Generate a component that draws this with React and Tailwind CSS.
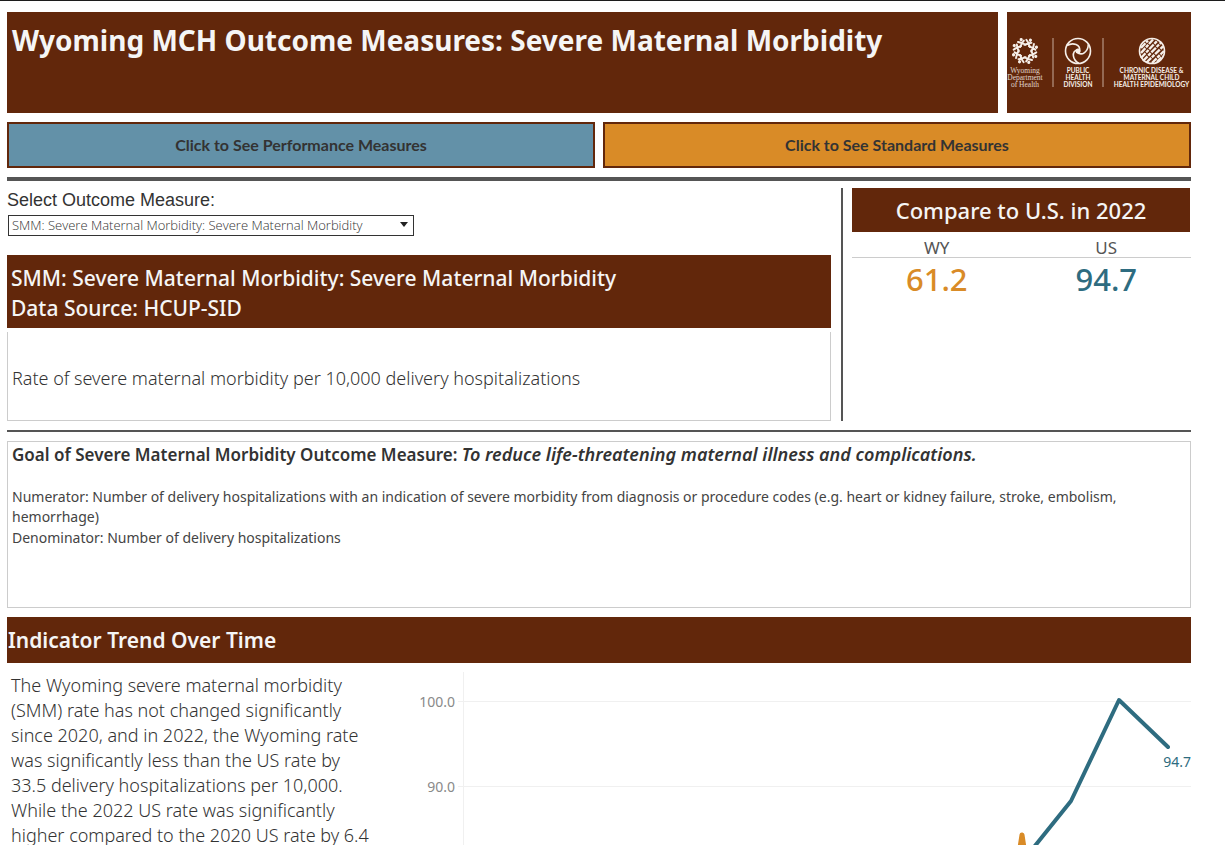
import React from "react";

const FIGURES = [0, 45, 90, 135, 180, 225, 270, 315];
const ARMS = [0, 120, 240];

function Logos() {
  return (
    <svg viewBox="0 0 368 202" className="block h-[101px] w-[184px] text-[#f6efe9]" role="img" aria-label="Program logos">
      <g transform="translate(36 78)" fill="none" stroke="currentColor" strokeLinecap="round">
        {FIGURES.map((a) => (
          <g key={a} transform={`rotate(${a + 22})`}>
            <path d="M-6 -11L1 -17L6 -11M1 -17L-6 -22M1 -17L6 -20" strokeWidth="3.800" />
            <circle cx="2" cy="-24" r="3.200" fill="currentColor" stroke="none" />
          </g>
        ))}
      </g>
      <g fill="currentColor" fontFamily='"Liberation Serif", serif' fontSize="15" textAnchor="middle" opacity="0.850">
        <text x="36" y="122">Wyoming</text>
        <text x="36" y="136">Department</text>
        <text x="36" y="150">of Health</text>
      </g>
      <path d="M92 52V150M192 52V150" stroke="#a5806c" strokeWidth="3" />
      <g transform="translate(142 78)" fill="none" stroke="currentColor" strokeWidth="3.200">
        <circle r="25" />
        {ARMS.map((a) => (
          <path key={a} transform={`rotate(${a})`} d="M-22 -11C-10 -18 6 -13 3 1" />
        ))}
        <circle r="5" fill="currentColor" stroke="none" />
      </g>
      <g transform="translate(290 78)" fill="none" stroke="currentColor">
        <circle r="25" strokeWidth="3.200" />
        <path
          d="M-22 4L2 -23M-22 14L12 -22M-18 20L19 -18M-11 23L23 -10M0 24L24 0M-22 -6L-8 -21M10 22L22 10"
          strokeWidth="4.800"
          strokeDasharray="13 2 7 2"
        />
      </g>
      <g fill="currentColor" fontFamily="Lato, sans-serif" fontWeight="700" fontSize="13" textAnchor="middle">
        <text x="142" y="121">PUBLIC</text>
        <text x="142" y="136">HEALTH</text>
        <text x="142" y="150">DIVISION</text>
        <text x="289" y="121">CHRONIC DISEASE &amp;</text>
        <text x="289" y="136">MATERNAL CHILD</text>
        <text x="289" y="150">HEALTH EPIDEMIOLOGY</text>
      </g>
    </svg>
  );
}

function TrendChart() {
  return (
    <svg viewBox="0 0 778 173" preserveAspectRatio="xMaxYMin meet" className="block w-full" role="img" aria-label="Indicator trend over time">
      <g stroke="#f0f0f0" strokeWidth="1">
        <path d="M50.500 0V173M45 29.500H778M45 114.500H778" />
      </g>
      <g fill="#8a8a8a" fontFamily='"Noto Sans", sans-serif' fontSize="14" textAnchor="end">
        <text x="42" y="35">100.0</text>
        <text x="42" y="120">90.0</text>
      </g>
      <g fill="none" strokeWidth="4" strokeLinejoin="round" strokeLinecap="round">
        <path stroke="#d98b27" strokeWidth="5" d="M597 240L609 163L621 240" />
        <path stroke="#2e6c80" d="M609 190L658 129L706 28L755 75" />
      </g>
      <text x="778" y="95" fill="#2e6c80" fontFamily='"Noto Sans", sans-serif' fontSize="14" textAnchor="end">94.7</text>
    </svg>
  );
}

export default function App() {
  return (
    <div className="h-screen overflow-hidden border-t border-[#1c1c1c] bg-white pt-[11px] pr-[34px] pl-[7px] font-['Noto_Sans',sans-serif] text-[#333]">
      <header className="flex gap-[9px]">
        <h1 className="flex-1 bg-[#62270b] px-[5px] pt-2 text-[28px] leading-10 font-bold text-[#f5f5f5]">
          Wyoming MCH Outcome Measures: Severe Maternal Morbidity
        </h1>
        <div className="shrink-0 bg-[#62270b]">
          <Logos />
        </div>
      </header>

      <nav className="mt-[9px] grid grid-cols-2 gap-2 font-[Lato,sans-serif] text-[16px] font-bold">
        <button type="button" className="h-[46px] border-2 border-[#62270b] bg-[#6391a8]">
          Click to See Performance Measures
        </button>
        <button type="button" className="h-[46px] border-2 border-[#62270b] bg-[#d98b27]">
          Click to See Standard Measures
        </button>
      </nav>

      <div className="mt-[9px] h-1 bg-[#555]" />

      <div className="mt-[7px] flex">
        <section className="flex flex-1 flex-col">
          <label htmlFor="measure" className="font-['Liberation_Sans',sans-serif] text-[18px] leading-6">
            Select Outcome Measure:
          </label>
          <div className="relative mt-[3px] ml-px w-[406px]">
            <select id="measure" className="block h-[21px] w-full appearance-none border border-[#333] bg-white px-[3px] font-['Open_Sans',sans-serif] text-[13px] leading-[19px] font-light">
              <option>SMM: Severe Maternal Morbidity: Severe Maternal Morbidity</option>
            </select>
            <svg viewBox="0 0 8 5" className="pointer-events-none absolute top-[7px] right-[6px] h-[5px] w-2" aria-hidden="true">
              <path d="M0 0H8L4 5Z" fill="#222" />
            </svg>
          </div>
          <h2 className="mt-[19px] bg-[#62270b] px-1 pt-2 pb-[5px] text-[21px] leading-[30px] font-medium text-[#f5f5f5]">
            SMM: Severe Maternal Morbidity: Severe Maternal Morbidity
            <br />
            Data Source: HCUP-SID
          </h2>
          <p className="mt-1 flex h-[89px] items-center border border-t-0 border-[#ccc] px-1 pt-1 text-[18px] font-[350]">
            Rate of severe maternal morbidity per 10,000 delivery hospitalizations
          </p>
        </section>

        <div className="mr-[9px] ml-[10px] w-[2px] bg-[#555]" />

        <section className="w-[339px]">
          <h2 className="mr-px bg-[#62270b] pt-px text-center text-[22px] leading-[43px] font-medium text-[#f5f5f5]">
            Compare to U.S. in 2022
          </h2>
          <table className="w-full table-fixed text-center">
            <thead>
              <tr className="border-b border-[#ccc] text-[17px] leading-[19px] text-[#555]">
                <th className="pt-[6px] font-normal">WY</th>
                <th className="pt-[6px] font-normal">US</th>
              </tr>
            </thead>
            <tbody>
              <tr className="text-[31px] leading-[42px] font-medium">
                <td className="text-[#d98b27]">61.2</td>
                <td className="text-[#2e6c80]">94.7</td>
              </tr>
            </tbody>
          </table>
        </section>
      </div>

      <div className="mt-[9px] h-[2px] bg-[#555]" />

      <section className="mt-[9px] h-[167px] border border-[#ccc] px-1">
        <h3 className="text-[17px] leading-6 font-semibold">
          Goal of Severe Maternal Morbidity Outcome Measure:{" "}
          <em className="text-[18px]">To reduce life-threatening maternal illness and complications.</em>
        </h3>
        <p className="mt-5 text-[14px] leading-5 text-[#444]">
          Numerator: Number of delivery hospitalizations with an indication of severe morbidity from diagnosis or procedure codes (e.g. heart or kidney failure, stroke, embolism, hemorrhage)
        </p>
        <p className="mt-px text-[14px] leading-5 text-[#444]">Denominator: Number of delivery hospitalizations</p>
      </section>

      <h2 className="mt-[9px] bg-[#62270b] px-px pt-px text-[21px] leading-[45px] font-semibold text-[#f5f5f5]">
        Indicator Trend Over Time
      </h2>

      <section className="mt-[9px] flex">
        <p className="w-[406px] shrink-0 pt-px pr-[38px] pl-1 text-[18px] leading-[25px] font-[350]">
          The Wyoming severe maternal morbidity (SMM) rate has not changed significantly since 2020, and in 2022, the Wyoming rate was significantly less than the US rate by 33.5 delivery hospitalizations per 10,000. While the 2022 US rate was significantly higher compared to the 2020 US rate by 6.4
        </p>
        <div className="min-w-0 flex-1">
          <TrendChart />
        </div>
      </section>
    </div>
  );
}
